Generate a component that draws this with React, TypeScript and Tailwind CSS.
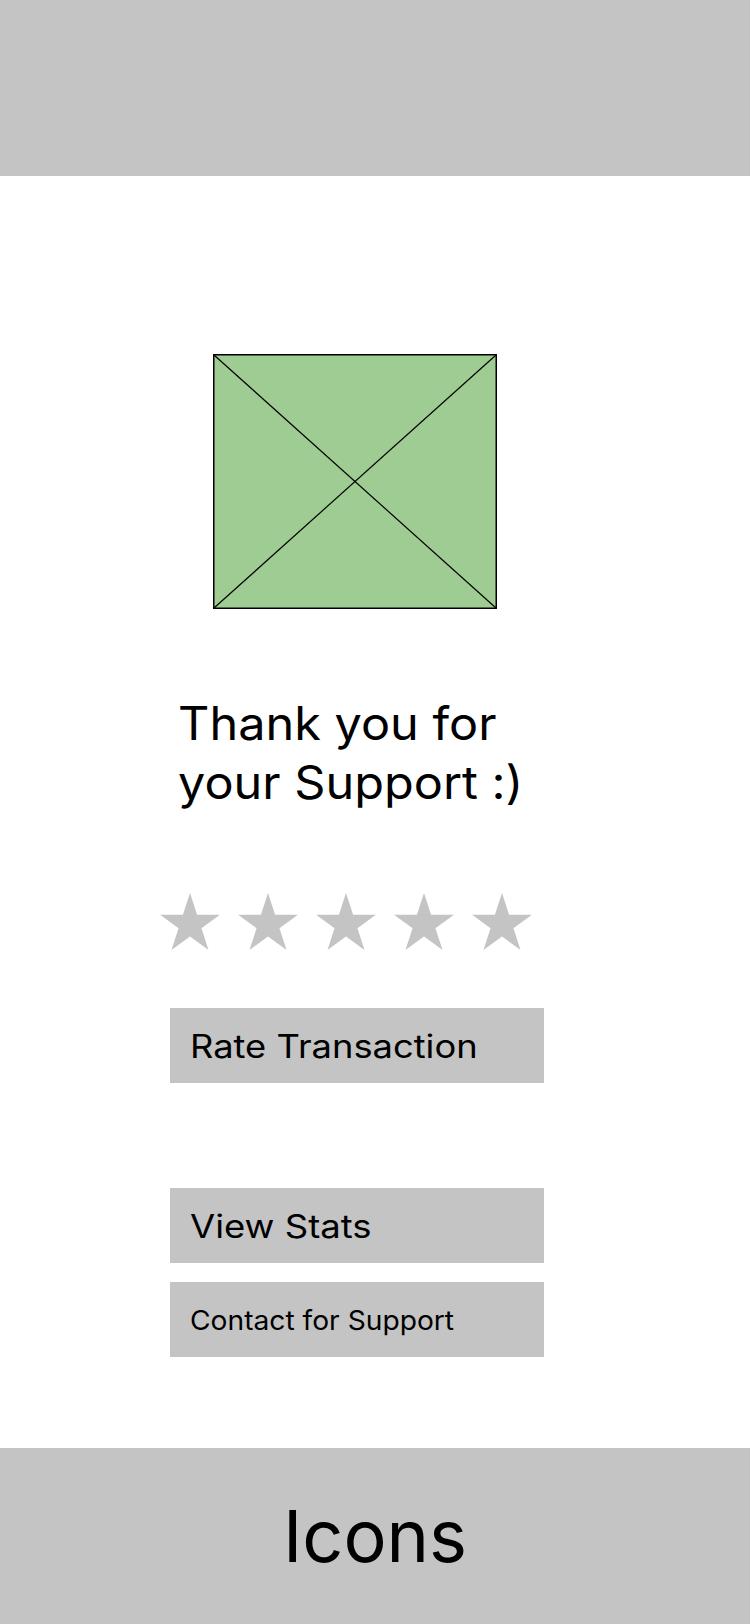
const STAR = '30,0 37.08,21.76 59.96,21.77 41.45,35.22 48.52,56.98 30,43.54 11.48,56.98 18.55,35.22 0.04,21.77 22.92,21.76'

const Star = () => (
  <svg width="60" height="57" viewBox="0 0 60 57">
    <polygon points={STAR} fill="#c4c4c4" />
  </svg>
)

const Placeholder = () => (
  <svg width="284" height="255" viewBox="0 0 284 255" className="block">
    <rect x="0.75" y="0.75" width="282.5" height="253.5" fill="#9fcc92" stroke="#000" strokeWidth="1.5" />
    <line x1="1" y1="1" x2="283" y2="254" stroke="#000" strokeWidth="1.2" />
    <line x1="283" y1="1" x2="1" y2="254" stroke="#000" strokeWidth="1.2" />
  </svg>
)

// the mockup text is slightly stretched sideways, hence the scale-x on labels
const ActionButton = ({ label, text }: { label: string; text: string }) => (
  <button className="flex h-[75px] w-[374px] items-center bg-[#c4c4c4] pl-[20px] pt-[3px] text-left text-black">
    <span className={`inline-block origin-left whitespace-nowrap ${text}`}>{label}</span>
  </button>
)

export default function App() {
  return (
    <div
      className="flex h-[1624px] w-[750px] flex-col bg-white text-black"
      style={{ fontFamily: 'Inter, "Noto Sans", sans-serif' }}
    >
      <header className="h-[176px] shrink-0 bg-[#c4c4c4]" />

      <main className="flex flex-1 flex-col">
        <div className="ml-[213px] mt-[178px]">
          <Placeholder />
        </div>

        <h1 className="ml-[178px] mt-[85px] origin-left scale-x-[1.057] text-[46px] leading-[59px] font-normal">
          Thank you for
          <br />
          your Support :)
        </h1>

        <div className="ml-[160px] mt-[81px] flex gap-[18px]">
          <Star />
          <Star />
          <Star />
          <Star />
          <Star />
        </div>

        <div className="ml-[170px] mt-[58px]">
          <ActionButton label="Rate Transaction" text="text-[32px] scale-x-[1.135]" />
        </div>

        <div className="ml-[170px] mt-[105px] flex flex-col gap-[19px]">
          <ActionButton label="View Stats" text="text-[32px] scale-x-[1.14]" />
          <ActionButton label="Contact for Support" text="text-[27px] scale-x-[1.044]" />
        </div>
      </main>

      <footer className="flex h-[176px] shrink-0 items-center justify-center bg-[#c4c4c4]">
        <span className="text-[72px] leading-none">Icons</span>
      </footer>
    </div>
  )
}
